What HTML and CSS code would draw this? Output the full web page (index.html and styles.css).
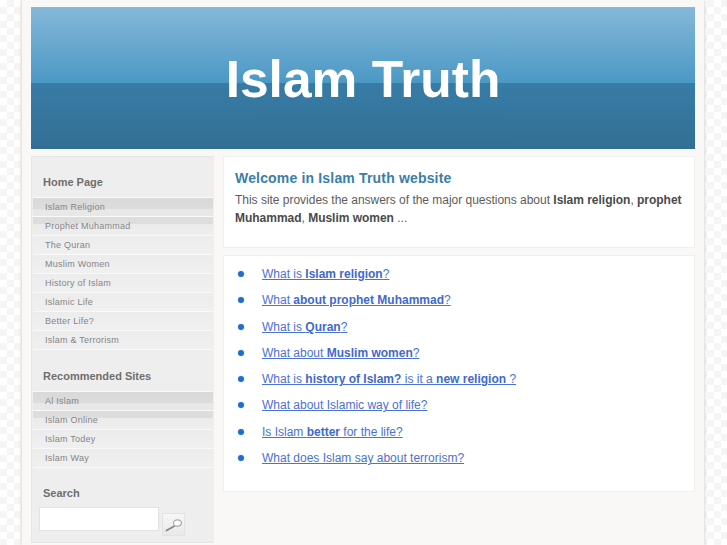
FILE: index.html
```html
<!DOCTYPE html>
<html lang="en">

<head>
  <meta charset="UTF-8">
  <meta name="viewport" content="width=device-width, initial-scale=1.0">
  <title>Islam Truth</title>
  <link rel="stylesheet" href="styles.css">
</head>

<body>
  <div class="wrapper">

    <!-- Header -->
    <div class="header">
      <h1 class="site-title">Islam Truth</h1>
    </div>

    <div class="columns">

      <!-- Sidebar -->
      <div class="sidebar">
        <h3 class="side-title">Home Page</h3>
        <ul class="side-menu">
          <li class="side-item active"><a href="#">Islam Religion</a></li>
          <li class="side-item next"><a href="#">Prophet Muhammad</a></li>
          <li class="side-item"><a href="#">The Quran</a></li>
          <li class="side-item"><a href="#">Muslim Women</a></li>
          <li class="side-item"><a href="#">History of Islam</a></li>
          <li class="side-item"><a href="#">Islamic Life</a></li>
          <li class="side-item"><a href="#">Better Life?</a></li>
          <li class="side-item"><a href="#">Islam &amp; Terrorism</a></li>
        </ul>

        <h3 class="side-title sites-title">Recommended Sites</h3>
        <ul class="side-menu">
          <li class="side-item active"><a href="#">Al Islam</a></li>
          <li class="side-item next"><a href="#">Islam Online</a></li>
          <li class="side-item"><a href="#">Islam Todey</a></li>
          <li class="side-item"><a href="#">Islam Way</a></li>
        </ul>

        <h3 class="side-title search-title">Search</h3>
        <form class="search-form">
          <input class="search-input" type="text">
          <button class="search-btn" type="button" aria-label="Search">
            <svg width="18" height="14" viewBox="0 0 18 14">
              <path d="M1.5 12.5 L9.5 8" stroke="#888" stroke-width="2" stroke-linecap="round" fill="none" />
              <ellipse cx="12.5" cy="5" rx="4" ry="3.2" fill="#fff" stroke="#aaa" stroke-width="1.2" />
            </svg>
          </button>
        </form>
      </div>

      <!-- Main content -->
      <div class="content">
        <div class="panel intro">
          <h2 class="intro-title">Welcome in Islam Truth website</h2>
          <p class="intro-text">This site provides the answers of the major questions about <b>Islam religion</b>, <b>prophet Muhammad</b>, <b>Muslim women</b> ...</p>
        </div>

        <div class="panel questions">
          <ul class="question-list">
            <li><a href="#">What is <b>Islam religion</b>?</a></li>
            <li><a href="#">What <b>about prophet Muhammad</b>?</a></li>
            <li><a href="#">What is <b>Quran</b>?</a></li>
            <li><a href="#">What about <b>Muslim women</b>?</a></li>
            <li><a href="#">What is <b>history of Islam?</b> is it a <b>new religion</b> ?</a></li>
            <li><a href="#">What about Islamic way of life?</a></li>
            <li><a href="#">Is Islam <b>better</b> for the life?</a></li>
            <li><a href="#">What does Islam say about terrorism?</a></li>
          </ul>
        </div>
      </div>

    </div>
  </div>
</body>

</html>
```

FILE: styles.css
```css
body {
  margin: 0;
  height: 545px;
  overflow: hidden;
  font-family: "Liberation Sans", Arial, sans-serif;
  background-color: #fff;
  background-image: conic-gradient(#f5f5f5 25%, #fff 0 50%, #f5f5f5 0 75%, #fff 0);
  background-size: 14px 14px;
}

.wrapper {
  width: 664px;
  height: 538px;
  margin-left: 22px;
  padding: 7px 9px 0;
  background-color: #f9f8f6;
  box-shadow: -1px 0 3px #dcdcdc, 1px 0 3px #dcdcdc;
}

.header {
  height: 140px;
  padding-top: 2px;
  display: flex;
  justify-content: center;
  align-items: center;
  background: linear-gradient(#85b8d9 0, #4b98c5 53.5%, #377ca6 53.5%, #336f95 100%);
}

.site-title {
  margin: 0;
  color: #fff;
  font-size: 51.5px;
  font-weight: bold;
}

.columns {
  display: flex;
  gap: 9px;
  margin-top: 7px;
}

.sidebar {
  width: 180px;
  height: 385px;
  flex-shrink: 0;
  padding: 0 1px;
  background-color: #eee;
  border: 1px solid #e6e6e6;
  border-width: 1px 0 1px 1px;
}

.side-title {
  margin: 0;
  padding: 19px 0 8px 10px;
  color: #6f6f6f;
  font-size: 11px;
  line-height: 13px;
  font-weight: bold;
}

.sites-title {
  padding-top: 20px;
}

.search-title {
  padding-bottom: 7px;
}

.side-menu {
  margin: 0;
  padding: 0;
  list-style: none;
  border-top: 1px solid #f9f9f9;
  border-bottom: 1px solid #f9f9f9;
}

.side-item {
  height: 18px;
  line-height: 18px;
  padding-left: 12px;
  background: linear-gradient(#ececec, #f0f0f0);
  border-bottom: 1px solid #f9f9f9;
  font-size: 9px;
  letter-spacing: 0.25px;
}

.side-item:last-child {
  border-bottom: none;
}

.side-item a {
  color: #858585;
  text-decoration: none;
}

.side-item.active {
  background: linear-gradient(#d9d9d9 0, #dcdcdc 60%, #e8e8e8 60%, #e8e8e8 100%);
}

.side-item.next {
  background: linear-gradient(#dddddd 0, #dddddd 40%, #ebebeb 40%, #eeeeee 100%);
}

.search-form {
  display: flex;
  gap: 3px;
  padding-left: 6px;
}

.search-input {
  width: 120px;
  height: 24px;
  padding: 0;
  box-sizing: border-box;
  background-color: #fff;
  border: 1px solid #e2e2e2;
}

.search-btn {
  width: 23px;
  height: 23px;
  margin-top: 6px;
  padding: 0;
  display: flex;
  justify-content: center;
  align-items: center;
  background: linear-gradient(#f6f6f6, #e9e9e9);
  border: 1px solid #e2e2e2;
}

.content {
  width: 472px;
}

.panel {
  background-color: #fff;
  border: 1px solid #efefec;
  box-sizing: border-box;
}

.intro {
  height: 92px;
  padding: 13px 5px 0 11px;
  margin-bottom: 7px;
}

.intro-title {
  margin: 0;
  color: #3a7ea6;
  font-size: 14px;
  line-height: 17px;
  font-weight: bold;
  letter-spacing: 0.17px;
}

.intro-text {
  margin: 4px 0 0;
  color: #5c5c5c;
  font-size: 12px;
  line-height: 18px;
  letter-spacing: -0.02px;
}

.intro-text b {
  color: #4a4a4a;
}

.questions {
  height: 237px;
  padding-top: 5px;
}

.question-list {
  margin: 0;
  padding: 0;
  list-style: none;
}

.question-list li {
  position: relative;
  height: 26.3px;
  line-height: 26.3px;
  padding-left: 38px;
  font-size: 12px;
}

.question-list li::before {
  content: "";
  position: absolute;
  left: 14px;
  top: 10px;
  width: 6px;
  height: 6px;
  border-radius: 50%;
  background-color: #1a6fd0;
  box-shadow: 0 0 2px #b8d0ee;
}

.question-list a {
  color: #4a72d4;
}

.question-list b {
  color: #4069cc;
}
```
